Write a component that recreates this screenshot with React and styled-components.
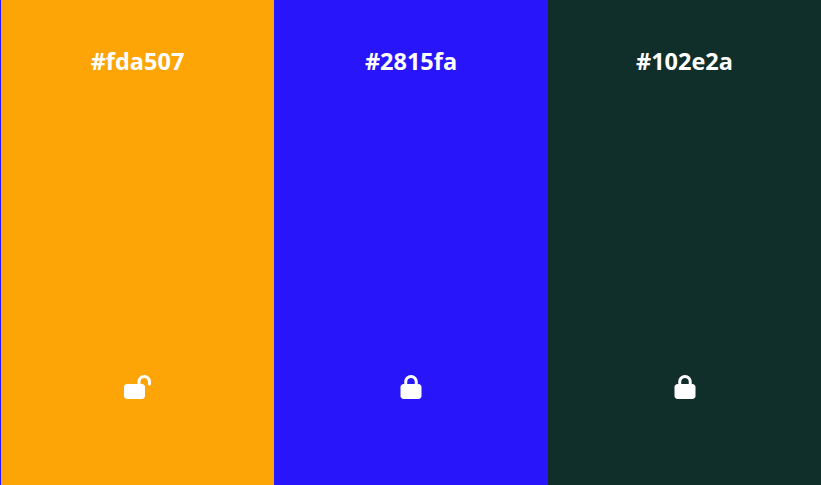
import React from 'react';
import styled, { createGlobalStyle } from 'styled-components';
import { FaLock, FaLockOpen } from 'react-icons/fa6';

const GlobalStyle = createGlobalStyle`
  html, body {
    margin: 0;
    padding: 0;
    background: #2815fa;
  }
`;

const colors = [
  { hex: '#fda507', locked: false },
  { hex: '#2815fa', locked: true },
  { hex: '#102e2a', locked: true },
];

const Palette = styled.div`
  display: grid;
  grid-template-columns: 273px 274px 273px;
  height: 485px;
  padding-left: 1px;
  font-family: "Open Sans", sans-serif;
`;

const Column = styled.div`
  display: flex;
  flex-direction: column;
  align-items: center;
  justify-content: space-between;
  padding: 45px 0 86px;
  background: ${(p) => p.$color};
  color: #fff;
`;

const Hex = styled.h2`
  margin: 0;
  font-size: 23.5px;
  line-height: 32px;
  font-weight: 700;
`;

const LockButton = styled.div`
  display: flex;

  svg {
    width: ${(p) => (p.$open ? '27px' : '24px')};
    height: 24px;
  }
`;

const App = () => (
  <>
    <GlobalStyle />
    <Palette>
      {colors.map((c) => (
        <Column key={c.hex} $color={c.hex}>
          <Hex>{c.hex}</Hex>
          <LockButton $open={!c.locked}>{c.locked ? <FaLock /> : <FaLockOpen />}</LockButton>
        </Column>
      ))}
    </Palette>
  </>
);

export default App;
